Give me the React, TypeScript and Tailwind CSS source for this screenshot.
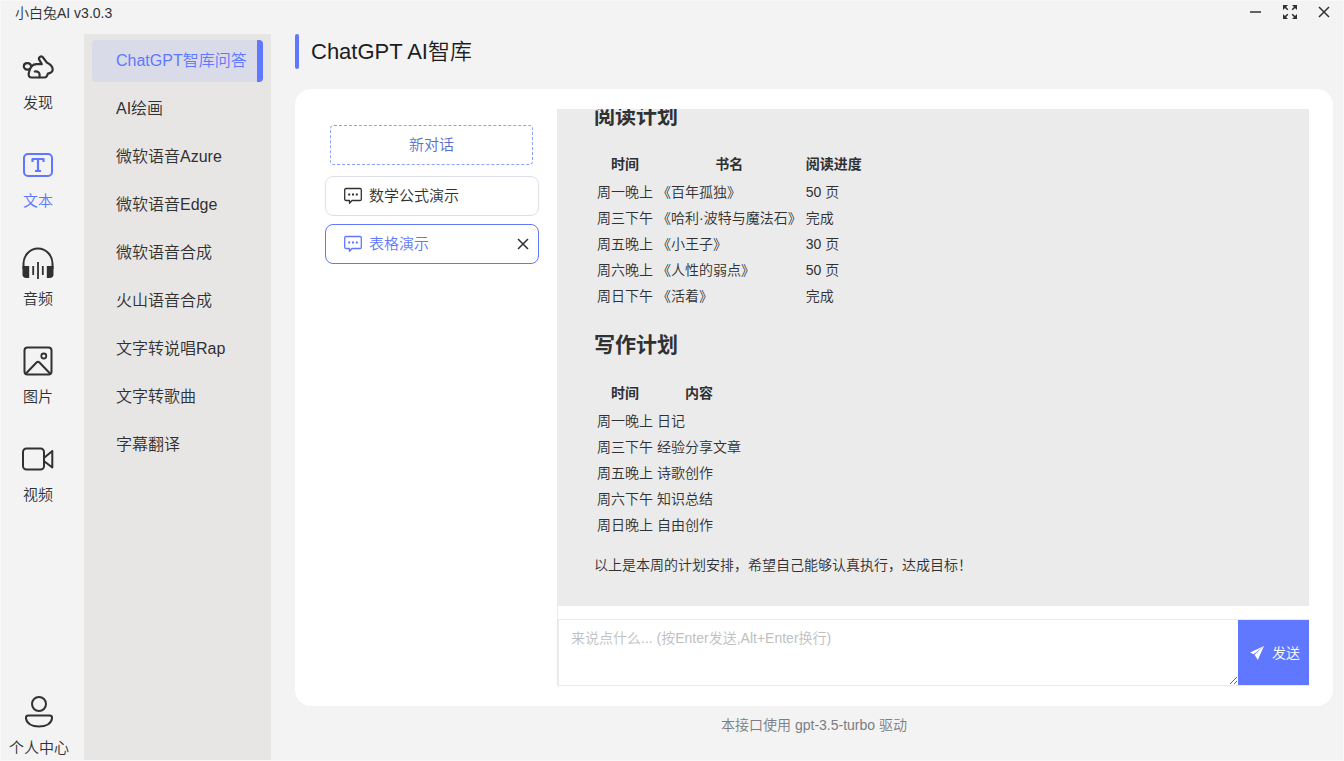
import type { ReactNode } from "react";

const icon = "h-8 w-8 fill-none stroke-current stroke-2";

function RabbitIcon() {
  return (
    <svg viewBox="0 0 32 32" className={icon} strokeLinecap="round" strokeLinejoin="round" aria-hidden="true">
      <path d="M19.800 13 17.400 9.200C15.800 6.200 19.200 4.200 21 6.500L24.700 11.400C28 13 30.700 16 30.700 18.400c0 2.400-2.200 3.600-4.800 4.200l-.7 1.800c-.5 1.500-1.200 2.100-2.600 2.100H9.400c-2.800 0-3.200-2.400-2.400-5.400C8.200 16 10.400 13.300 14.500 13.200H19.800" strokeWidth="2.200" />
      <path d="M9.200 15.200C8.400 11 2 11.400 1.800 15.200c-.1 2.600 2.200 3.900 4.800 3.200" strokeWidth="2.200" />
      <path d="M12.800 20.500c2.900-.4 4.800 1 4.800 3.200v2.500" strokeWidth="2.200" />
    </svg>
  );
}

function TextIcon() {
  return (
    <svg viewBox="0 0 32 32" className={icon} strokeLinejoin="round" aria-hidden="true">
      <rect x="2" y="5" width="28" height="22" rx="4" />
      <path d="M10.500 13v-3h11v3M16 10v12M13 22h6" strokeWidth="2.200" />
    </svg>
  );
}

function HeadphonesIcon() {
  return (
    <svg viewBox="0 0 32 32" className={icon} aria-hidden="true">
      <path d="M1.500 22v-5.500C1.500 8.500 8 1.500 16 1.500s14.500 7 14.500 15V22" strokeWidth="2" />
      <path d="M.5 19h6.700v12H4.200C2 31 .5 29.500.5 28zM31.500 19h-6.700v12h3c2.200 0 3.700-1.500 3.700-3z" className="fill-current stroke-none" />
      <path d="M16 15v17M11.200 19v9M20.800 19v9" strokeWidth="1.800" />
    </svg>
  );
}

function PictureIcon() {
  return (
    <svg viewBox="0 0 32 32" className={icon} strokeLinejoin="round" aria-hidden="true">
      <rect x="2.500" y="2.500" width="27" height="27" rx="3" />
      <circle cx="21.800" cy="11" r="2.500" strokeWidth="1.800" />
      <path d="M4 28.500 14.500 17.500c1-1 2-1 3 0L28 28.500" />
    </svg>
  );
}

function VideoIcon() {
  return (
    <svg viewBox="0 0 32 32" className={icon} strokeLinejoin="round" aria-hidden="true">
      <rect x="1" y="5.500" width="21" height="21" rx="3.500" />
      <path d="M22.500 14.500 30.300 8v16.500l-7.800-6" />
    </svg>
  );
}

function UserIcon() {
  return (
    <svg viewBox="0 0 32 32" className={icon} strokeLinejoin="round" aria-hidden="true">
      <circle cx="16" cy="8" r="7" />
      <path d="M5.500 19.500h21c2 0 2.800 1 2.500 3-.8 5-6 8-13 8s-12.200-3-13-8c-.3-2 .5-3 2.500-3z" />
    </svg>
  );
}

function ChatIcon() {
  return (
    <svg viewBox="0 0 18 18" className="h-[18px] w-[18px] shrink-0 fill-none stroke-current" strokeLinejoin="round" aria-hidden="true">
      <path d="M2 1.500h14c.8 0 1.300.5 1.300 1.300v9.400c0 .8-.5 1.300-1.300 1.300H8l-2.500 2.800v-2.800H2c-.8 0-1.300-.5-1.300-1.300V2.800c0-.8.5-1.300 1.300-1.300z" strokeWidth="1.300" />
      <path d="M4.200 7.500h2M8 7.500h2M11.800 7.500h2" strokeWidth="2" />
    </svg>
  );
}

function CrossIcon() {
  return (
    <svg viewBox="0 0 12 12" className="h-3 w-3 stroke-current" aria-hidden="true">
      <path d="M1 1l10 10M11 1 1 11" strokeWidth="1.500" />
    </svg>
  );
}

function ExpandIcon() {
  return (
    <svg viewBox="0 0 14 14" className="h-[14px] w-[14px] fill-current stroke-current" aria-hidden="true">
      <path d="M0 0h5L0 5zM14 0v5L9 0zM0 14V9l5 5zM14 14H9l5-5z" className="stroke-none" />
      <path d="M1.500 1.500l3.300 3.300M12.500 1.500l-3.300 3.300M1.500 12.500l3.300-3.300M12.500 12.500l-3.300-3.300" strokeWidth="1.600" />
    </svg>
  );
}

function SendIcon() {
  return (
    <svg viewBox="0 0 14 14" className="h-[14px] w-[14px] fill-current" aria-hidden="true">
      <path d="M14 0 0 6.400l3.600 1.900zM14 0 4.500 8.800l3.300 5.200z" />
    </svg>
  );
}

const railItems: { label: string; icon: ReactNode; active?: boolean }[] = [
  { label: "发现", icon: <RabbitIcon /> },
  { label: "文本", icon: <TextIcon />, active: true },
  { label: "音频", icon: <HeadphonesIcon /> },
  { label: "图片", icon: <PictureIcon /> },
  { label: "视频", icon: <VideoIcon /> },
];

const menuItems = [
  "ChatGPT智库问答",
  "AI绘画",
  "微软语音Azure",
  "微软语音Edge",
  "微软语音合成",
  "火山语音合成",
  "文字转说唱Rap",
  "文字转歌曲",
  "字幕翻译",
];

function RailLink({ label, icon, active }: { label: string; icon: ReactNode; active?: boolean }) {
  return (
    <a
      href="#"
      className={`flex flex-col items-center gap-[10px] pt-[17px] pb-[19px] text-[15px] leading-5 ${active ? "text-[#5f78ff]" : "text-[#303133]"}`}
    >
      {icon}
      {label}
    </a>
  );
}

function PlanTable({ head, rows }: { head: string[]; rows: string[][] }) {
  return (
    <table className="mt-[19px] mb-5 border-separate border-spacing-[2px] text-sm leading-[22px]">
      <thead>
        <tr>
          {head.map((h) => (
            <th key={h} className="px-px pt-px pb-[3px] text-center font-bold">{h}</th>
          ))}
        </tr>
      </thead>
      <tbody>
        {rows.map((row) => (
          <tr key={row[0]}>
            {row.map((cell, i) => (
              <td key={i} className="p-px">{cell}</td>
            ))}
          </tr>
        ))}
      </tbody>
    </table>
  );
}

export default function App() {
  return (
    <div className="flex h-screen flex-col overflow-hidden border border-[#f8f8f8] bg-[#f3f3f3] font-['Liberation_Sans','Noto_Sans_CJK_SC',sans-serif] font-[350] text-[#303133]">
      <header className="flex h-[33px] shrink-0 items-start justify-between pr-[13px] pl-[14px]">
        <span className="pt-[2px] text-sm leading-5">小白兔AI v3.0.3</span>
        <div className="flex h-[22px] items-center gap-[21px]">
          <button aria-label="最小化" className="flex h-4 w-[14px] items-center justify-center">
            <span className="h-[2px] w-[11px] bg-[#606266]" />
          </button>
          <button aria-label="全屏"><ExpandIcon /></button>
          <button aria-label="关闭"><CrossIcon /></button>
        </div>
      </header>

      <div className="flex min-h-0 flex-1">
        <nav className="flex w-[83px] shrink-0 flex-col justify-between pr-[9px]">
          <div>
            {railItems.map((item) => (
              <RailLink key={item.label} {...item} />
            ))}
          </div>
          <a href="#" className="flex flex-col items-center gap-[10px] pb-[2px] pl-[2px] text-[15px] leading-5">
            <UserIcon />
            个人中心
          </a>
        </nav>

        <nav className="flex w-[187px] shrink-0 flex-col gap-[6px] bg-[#e8e6e4] px-2 pt-[6px]">
          {menuItems.map((label, i) => (
            <a
              key={label}
              href="#"
              className={`flex h-[42px] shrink-0 items-center rounded pl-6 text-base whitespace-nowrap ${i === 0 ? "border-r-[6px] border-[#5f78ff] bg-[#d9dbe8] text-[#5f78ff]" : ""}`}
            >
              {label}
            </a>
          ))}
        </nav>

        <main className="flex min-w-0 flex-1 flex-col pr-[10px] pl-6">
          <div className="flex h-[35px] shrink-0 items-center gap-3">
            <span className="h-full w-1 rounded-sm bg-[#5f78ff]" />
            <h1 className="text-[22px] font-[350] text-[#1d1d1f]">ChatGPT AI智库</h1>
          </div>

          <section className="mt-5 flex min-h-0 flex-1 rounded-2xl bg-white py-5 pr-6 pl-[30px]">
            <div className="flex w-[214px] shrink-0 flex-col gap-2 pt-4 text-[15px]">
              <button className="mr-[6px] mb-[3px] ml-[5px] h-10 rounded-sm border border-dashed border-[#8f9fff] text-[#5b6dd0]">
                新对话
              </button>
              <button className="flex h-10 items-center gap-[7px] rounded-lg border border-[#dcdfe6] pl-[18px]">
                <ChatIcon />
                数学公式演示
              </button>
              <div className="flex h-10 items-center justify-between rounded-lg border border-[#5f78ff] pr-[9px] pl-[18px]">
                <button className="flex items-center gap-[7px] text-[#5f78ff]">
                  <ChatIcon />
                  表格演示
                </button>
                <button aria-label="删除对话"><CrossIcon /></button>
              </div>
            </div>

            <div className="ml-[18px] flex min-w-0 flex-1 flex-col border-l border-[#ebebeb]">
              <div className="flex min-h-0 flex-1 flex-col justify-end overflow-hidden bg-[#ebebeb] px-9 pb-[30px] text-sm leading-[22px]">
                <article>
                  <h2 className="text-[21px] leading-[30px] font-bold">阅读计划</h2>
                  <PlanTable
                    head={["时间", "书名", "阅读进度"]}
                    rows={[
                      ["周一晚上", "《百年孤独》", "50 页"],
                      ["周三下午", "《哈利·波特与魔法石》", "完成"],
                      ["周五晚上", "《小王子》", "30 页"],
                      ["周六晚上", "《人性的弱点》", "50 页"],
                      ["周日下午", "《活着》", "完成"],
                    ]}
                  />
                  <h2 className="text-[21px] leading-[30px] font-bold">写作计划</h2>
                  <PlanTable
                    head={["时间", "内容"]}
                    rows={[
                      ["周一晚上", "日记"],
                      ["周三下午", "经验分享文章"],
                      ["周五晚上", "诗歌创作"],
                      ["周六下午", "知识总结"],
                      ["周日晚上", "自由创作"],
                    ]}
                  />
                  <p className="-mt-[5px]">以上是本周的计划安排，希望自己能够认真执行，达成目标！</p>
                </article>
              </div>

              <form className="mt-[13px] flex h-[67px] shrink-0 border-y border-l border-[#ebebeb]">
                <textarea
                  aria-label="消息"
                  placeholder="来说点什么... (按Enter发送,Alt+Enter换行)"
                  className="h-[65px] min-w-0 flex-1 resize-y px-3 pt-2 text-sm leading-5 outline-none placeholder:text-[#c0c0c0]"
                />
                <button type="button" className="flex w-[71px] shrink-0 items-center gap-2 bg-[#5f78ff] pl-3 text-sm text-white">
                  <SendIcon />
                  发送
                </button>
              </form>
            </div>
          </section>

          <footer className="h-[54px] shrink-0 pt-[9px] text-center text-sm leading-5 text-[#7a7d82]">
            本接口使用 gpt-3.5-turbo 驱动
          </footer>
        </main>
      </div>
    </div>
  );
}
